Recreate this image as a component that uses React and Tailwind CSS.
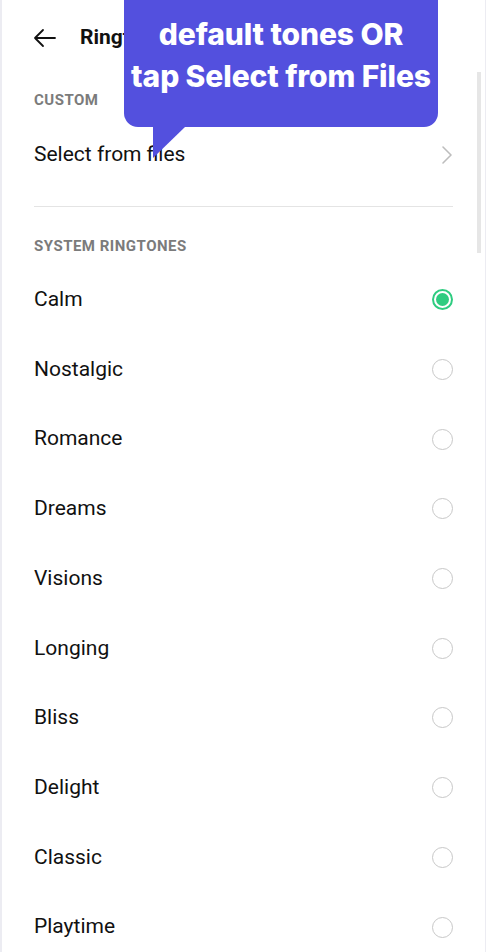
import React from 'react';

const tones = ['Calm', 'Nostalgic', 'Romance', 'Dreams', 'Visions', 'Longing', 'Bliss', 'Delight', 'Classic', 'Playtime'];

const Radio = ({ checked }) =>
    checked ? (
        <span className="w-[21px] h-[21px] rounded-full border-2 border-[#2ecc80] flex items-center justify-center">
            <span className="w-[13px] h-[13px] rounded-full bg-[#2ecc80]"></span>
        </span>
    ) : (
        <span className="w-[21px] h-[21px] rounded-full border-[1.5px] border-[#c8c8c8]"></span>
    );

const App = () => {
    return (
        <div className="relative w-[486px] h-[952px] overflow-hidden bg-white border-l-2 border-r border-[#ececf2] font-['Roboto',sans-serif] text-[#111]">
            {/* header */}
            <div className="h-[76px] flex items-center pl-[31px]">
                <svg width="24" height="24" viewBox="0 0 24 24" fill="none" stroke="#111" strokeWidth="1.8" strokeLinecap="round" strokeLinejoin="round">
                    <path d="M22 12H2M10 4l-8 8 8 8" />
                </svg>
                <span className="ml-[23px] text-[21px] font-bold">Ringtone</span>
            </div>

            {/* custom */}
            <div className="h-[48px] flex items-center px-[32px] text-[15px] font-bold text-[#7b7b7b] tracking-[0.5px]">CUSTOM</div>
            <div className="h-[62px] flex items-center justify-between pl-[32px] pr-[32px]">
                <span className="text-[21px]">Select from files</span>
                <svg width="12" height="20" viewBox="0 0 12 20" fill="none" stroke="#bdbdbd" strokeWidth="1.6" strokeLinecap="round" strokeLinejoin="round">
                    <path d="M2 2l8 8-8 8" />
                </svg>
            </div>
            <div className="mt-[20px] mx-[32px] border-t border-[#e4e4e4]"></div>

            {/* system */}
            <div className="h-[58px] pt-[31px] px-[32px] leading-[16px] text-[15px] font-bold text-[#7b7b7b] tracking-[0.5px]">SYSTEM RINGTONES</div>
            <div>
                {tones.map((t, i) => (
                    <div key={t} className="h-[69.7px] flex items-center justify-between pl-[32px] pr-[32px]">
                        <span className="text-[21px]">{t}</span>
                        <Radio checked={i === 0} />
                    </div>
                ))}
            </div>

            {/* scrollbar */}
            <div className="absolute left-[475px] top-[72px] w-[4px] h-[181px] bg-[#e6e6e6]"></div>

            {/* tooltip bubble */}
            <div className="absolute left-[122px] top-0 w-[314px] h-[127px] rounded-b-[14px] bg-[#5350de] pt-[13px] text-center text-white font-['Inter',sans-serif] font-extrabold text-[30px] leading-[42px] tracking-[-0.1px] whitespace-nowrap">
                <div>default tones OR</div>
                <div>tap Select from Files</div>
            </div>
            <svg className="absolute left-[151px] top-[126px]" width="33" height="32" viewBox="0 0 33 32">
                <polygon points="0,0 33,0 0,32" fill="#5350de" />
            </svg>
        </div>
    );
};

export default App;
